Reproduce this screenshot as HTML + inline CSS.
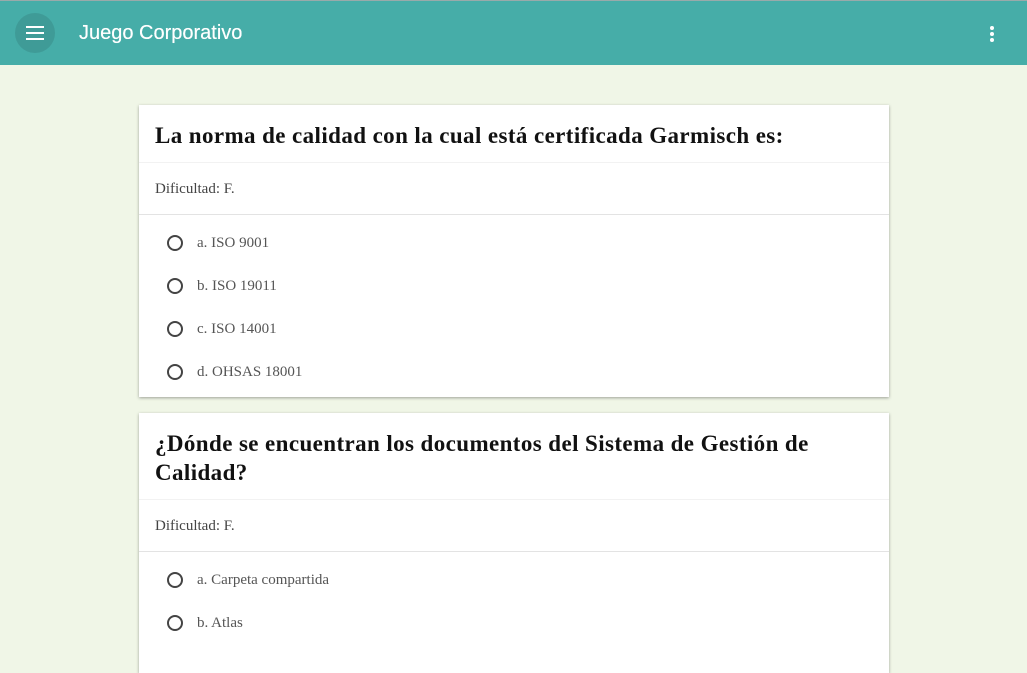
<!DOCTYPE html>
<html style="overflow:hidden"><head><style>
html,body{overflow:hidden}
body{margin:0;width:1027px;height:632px;background:#f0f6e7;font-family:"Liberation Serif",serif;}
.top{position:absolute;left:0;top:0;width:1027px;height:65px;background:#46ada8;border-top:1px solid #9aa;box-sizing:border-box}
.menu{position:absolute;left:15px;top:12px;width:40px;height:40px;border-radius:50%;background:#3f9b97}
.menu i{position:absolute;left:11px;width:18px;height:2px;background:#fff}
.ttl{position:absolute;left:79px;top:21px;color:#fff;font:20px "Liberation Sans",sans-serif;text-shadow:0 0 .4px #fff}
.dots{position:absolute;left:990px;top:25px}
.dots i{display:block;width:4px;height:4px;border-radius:50%;background:#fff;margin-bottom:2px}
.card{position:absolute;left:139px;width:750px;background:#fff;box-shadow:0 1px 3px rgba(0,0,0,.35)}
.card h2{margin:0;padding:16px 16px 12px;font-size:23px;letter-spacing:.4px;font-weight:bold;line-height:29px;color:#111;border-bottom:1px solid #f2f2f2}
.dif{height:51px;line-height:53px;padding-left:16px;font-size:15px;color:#444;border-bottom:1px solid #e3e3e3}
.op{height:43px;line-height:45px;padding-left:58px;position:relative;font-size:15px;color:#555}
.op:before{content:"";position:absolute;left:28px;top:14px;width:12px;height:12px;border:2px solid #444;border-radius:50%}
.opts{padding-top:6px}
</style></head><body>
<div class="top"><div class="menu"><i style="top:13px"></i><i style="top:19px"></i><i style="top:25px"></i></div>
<div class="ttl">Juego Corporativo</div><div class="dots"><i></i><i></i><i></i></div></div>
<div class="card" style="top:105px;height:292px"><h2>La norma de calidad con la cual está certificada Garmisch es:</h2>
<div class="dif">Dificultad: F.</div><div class="opts">
<div class="op">a. ISO 9001</div><div class="op">b. ISO 19011</div><div class="op">c. ISO 14001</div><div class="op">d. OHSAS 18001</div></div></div>
<div class="card" style="top:413px;height:260px"><h2>¿Dónde se encuentran los documentos del Sistema de Gestión de Calidad?</h2>
<div class="dif">Dificultad: F.</div><div class="opts">
<div class="op">a. Carpeta compartida</div><div class="op">b. Atlas</div></div></div>
</body></html>
